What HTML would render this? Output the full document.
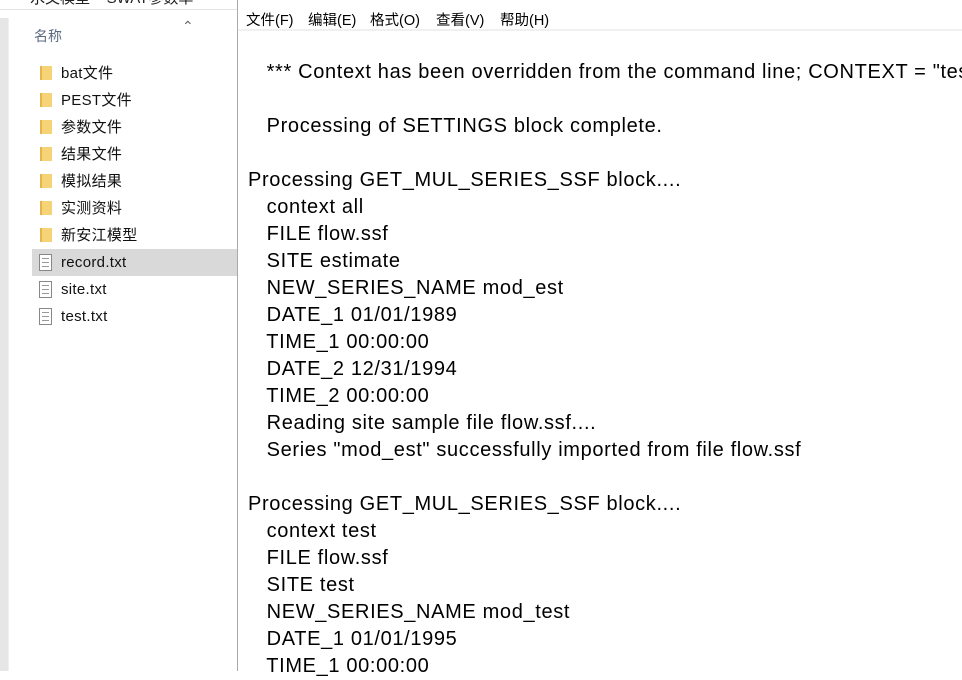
<!DOCTYPE html>
<html><head><meta charset="utf-8"><style>
body{margin:0;width:962px;height:671px;overflow:hidden;background:#fff;position:relative;font-family:"Liberation Sans","Noto Sans CJK SC",sans-serif}
#left{position:absolute;left:0;top:0;width:237px;height:671px;background:#fff;overflow:hidden}
#strip{position:absolute;left:0;top:18px;width:8px;height:653px;background:#e6e6e6}
#strip2{position:absolute;left:8px;top:18px;width:1px;height:653px;background:#f0f0f0}
#topline{position:absolute;left:0;top:9px;width:237px;height:1px;background:#e3e3e3}
.it{position:absolute;left:32px;width:205px;height:27px;font-size:15px;color:#111;line-height:27px;letter-spacing:0.3px}
.it span{position:absolute;left:29px}
.fold{position:absolute;left:8px;top:6px;width:10px;height:14px;background:#f6d376;border-left:2px solid #e3b54a}
.doc{position:absolute;left:7px;top:5px;width:11px;height:15px;border:1px solid #888;background:#fff}
.doc i{display:block;margin:3px 2px 0;height:1px;background:#999}
#right{position:absolute;left:237px;top:0;width:725px;height:671px;background:#fff;border-left:1px solid #aaa}
#menu{position:absolute;left:8px;top:9px;font-size:14.5px;color:#000;white-space:pre}
#menu b{font-weight:normal;position:absolute;top:0}
#mline{position:absolute;left:0;top:29px;width:725px;height:2px;background:#f0f0f0}
#txt{position:absolute;left:10px;top:59px;font-size:20px;line-height:27px;color:#000;white-space:pre;letter-spacing:0.65px}
</style></head><body>
<div id="left">
<div id="topline"></div>
<div style="position:absolute;left:30px;top:-13px;font-size:15px;color:#222;white-space:pre">水文模型    SWAT参数率</div>
<div id="strip"></div><div id="strip2"></div>
<div style="position:absolute;left:34px;top:26px;font-size:14px;color:#5a6a80">名称</div>
<div style="position:absolute;left:182px;top:18px;font-size:14px;color:#666">&#8963;</div>
<div class="it" style="top:60px"><div class="fold"></div><span>bat文件</span></div>
<div class="it" style="top:87px"><div class="fold"></div><span>PEST文件</span></div>
<div class="it" style="top:114px"><div class="fold"></div><span>参数文件</span></div>
<div class="it" style="top:141px"><div class="fold"></div><span>结果文件</span></div>
<div class="it" style="top:168px"><div class="fold"></div><span>模拟结果</span></div>
<div class="it" style="top:195px"><div class="fold"></div><span>实测资料</span></div>
<div class="it" style="top:222px"><div class="fold"></div><span>新安江模型</span></div>
<div class="it" style="top:249px;background:#d9d9d9"><div class="doc"><i></i><i></i><i></i></div><span>record.txt</span></div>
<div class="it" style="top:276px"><div class="doc"><i></i><i></i><i></i></div><span>site.txt</span></div>
<div class="it" style="top:303px"><div class="doc"><i></i><i></i><i></i></div><span>test.txt</span></div>
</div>
<div id="right">
<div id="menu"><b style="left:0">文件(F)</b><b style="left:62px">编辑(E)</b><b style="left:124px">格式(O)</b><b style="left:190px">查看(V)</b><b style="left:254px">帮助(H)</b></div>
<div id="mline"></div>
<div id="txt">   *** Context has been overridden from the command line; CONTEXT = "test"

   Processing of SETTINGS block complete.

Processing GET_MUL_SERIES_SSF block....
   context all
   FILE flow.ssf
   SITE estimate
   NEW_SERIES_NAME mod_est
   DATE_1 01/01/1989
   TIME_1 00:00:00
   DATE_2 12/31/1994
   TIME_2 00:00:00
   Reading site sample file flow.ssf....
   Series "mod_est" successfully imported from file flow.ssf

Processing GET_MUL_SERIES_SSF block....
   context test
   FILE flow.ssf
   SITE test
   NEW_SERIES_NAME mod_test
   DATE_1 01/01/1995
   TIME_1 00:00:00</div>
</div>
</body></html>
